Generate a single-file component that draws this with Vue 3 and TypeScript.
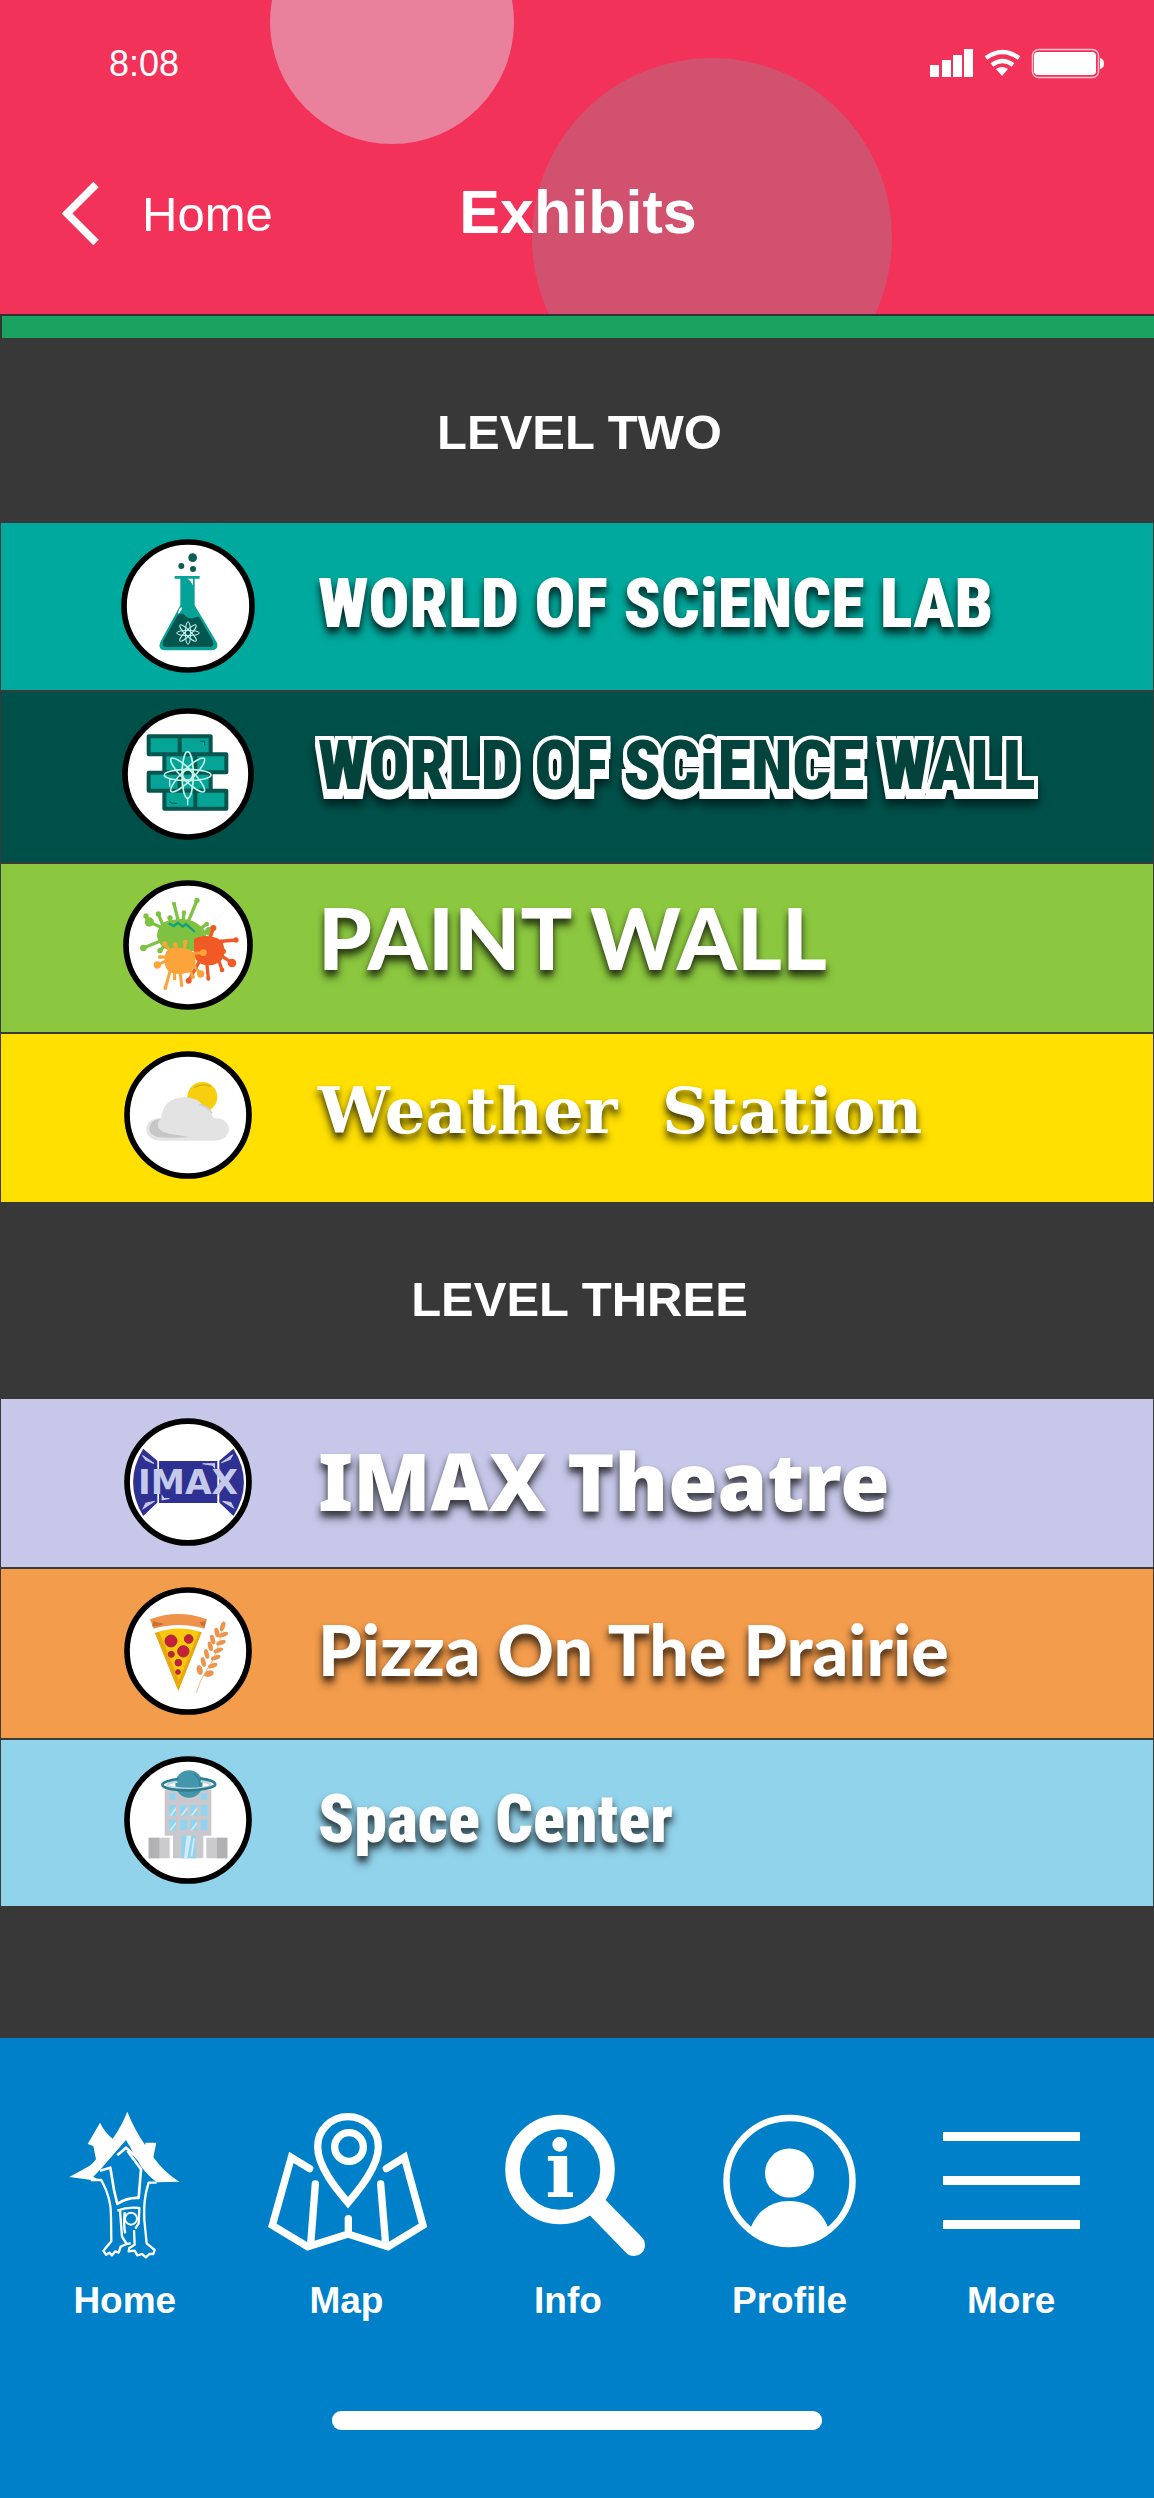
<script setup lang="ts">
interface Exhibit {
  id: string
  name: string
}

interface Level {
  id: string
  title: string
  exhibits: Exhibit[]
}

const levels: Level[] = [
  {
    id: 'two',
    title: 'LEVEL TWO',
    exhibits: [
      { id: 'lab', name: 'WORLD OF SCiENCE LAB' },
      { id: 'wall', name: 'WORLD OF SCiENCE WALL' },
      { id: 'paint', name: 'PAINT WALL' },
      { id: 'weather', name: 'Weather  Station' },
    ],
  },
  {
    id: 'three',
    title: 'LEVEL THREE',
    exhibits: [
      { id: 'imax', name: 'IMAX Theatre' },
      { id: 'pizza', name: 'Pizza On The Prairie' },
      { id: 'space', name: 'Space Center' },
    ],
  },
]

const tabs: string[] = ['Home', 'Map', 'Info', 'Profile', 'More']

// Paint drips: start x, start y, tip x, tip y, tip radius
type Drip = [number, number, number, number, number]
const greenDrips: Drip[] = [
  [205, 205, 150, 180, 14], [195, 200, 177, 156, 8], [240, 190, 224, 125, 6], [262, 190, 293, 115, 8],
  [250, 190, 254, 152, 7], [215, 190, 212, 168, 8], [200, 230, 132, 258, 10], [210, 235, 182, 266, 8],
  [290, 210, 322, 186, 7], [300, 215, 330, 208, 13], [146, 180, 140, 162, 8],
]
const redDrips: Drip[] = [
  [340, 240, 410, 234, 8], [330, 235, 342, 198, 9], [350, 270, 398, 303, 13], [350, 270, 368, 324, 7],
  [320, 280, 327, 350, 6], [310, 280, 268, 356, 9], [355, 262, 372, 268, 8], [345, 245, 366, 240, 7],
]
const orangeDrips: Drip[] = [
  [235, 280, 174, 309, 11], [220, 300, 198, 378, 6], [240, 310, 247, 370, 5], [225, 300, 226, 350, 5],
  [265, 305, 280, 344, 7], [270, 295, 304, 336, 11], [260, 275, 312, 272, 10], [215, 270, 196, 245, 8],
  [255, 265, 258, 240, 7], [235, 265, 228, 248, 7], [215, 285, 182, 285, 6],
]

const grains: [number, number, number][] = [
  [302, 292, -15], [313, 268, -15], [323, 244, -15], [341, 201, -15], [354, 180, -15], [334, 221, -15],
  [330, 303, 70], [341, 279, 70], [350, 255, 70], [358, 233, 70], [366, 210, 70], [373, 186, 70], [371, 161, 20],
]
const petals = [0, 45, 90, 135]
</script>

<template>
  <div class="app">
    <header class="top">
      <span class="bubble bubble-light"></span>
      <span class="bubble bubble-dusk"></span>
      <div class="status">
        <span class="clock">8:08</span>
        <svg class="signals" width="176" height="32" viewBox="929 47 176 32" aria-hidden="true">
          <g fill="#fff">
            <path d="M930 64h9v12h-9zM942 59h9v17h-9zM953 54h9v22h-9zM964 48h9v28h-9z" />
            <path d="M1002 75l-6-7q6-4 12 0z" />
            <rect x="1034" y="51" width="62" height="23" rx="4" />
            <path d="M1100 57q4 1 4 5.500t-4 5.500z" />
          </g>
          <g fill="none" stroke="#fff">
            <path d="M986 57q16-12 33 0M992 64q10.500-8 21 0" stroke-width="4.500" />
            <rect x="1032.500" y="48.500" width="66" height="28" rx="6" stroke="#ffc3cf" stroke-width="1.500" />
          </g>
        </svg>
      </div>
      <div class="bar">
        <a class="back" href="#home">
          <svg width="40" height="66" viewBox="61 182 40 66" aria-hidden="true">
            <path d="M97 185.500L68 214.500 97 243.500" fill="none" stroke="#fff" stroke-width="7.500" />
          </svg>
          <span>Home</span>
        </a>
        <h1>Exhibits</h1>
      </div>
    </header>
    <div class="stripe"></div>

    <main>
      <section v-for="level in levels" :key="level.id" :class="'level-' + level.id">
        <h2>{{ level.title }}</h2>
        <ul>
          <li v-for="item in level.exhibits" :key="item.id">
            <a class="row" :class="item.id" :href="'#' + item.id">
              <span class="badge-slot">
                <svg v-if="item.id === 'lab'" class="badge" viewBox="64 59 402 402" aria-hidden="true">
                  <circle cx="265" cy="260" r="192" fill="#fff" stroke="#000" stroke-width="17" />
                  <circle cx="279" cy="115" r="13" fill="#0b5f57" />
                  <circle cx="245" cy="140" r="9" fill="#0b5f57" />
                  <circle cx="280" cy="149" r="9" fill="#0b5f57" />
                  <path d="M225 170h75v8h-15v80l67 112q6 22-16 23H196q-22-2-15-23l61-112v-80h-17z" fill="#05a397" />
                  <path d="M264 178h16v20q-6-14-16-20zM236 277q2-10 10-14 3 8-10 22z" fill="#fff" />
                  <path d="M190 366l42-76q10-12 22-4 12 14 26 10t18-4l42 74q6 15-8 17H199q-15-2-9-17z" fill="#03554f" />
                  <g fill="none" stroke="#c8f5ee" stroke-width="3">
                    <ellipse v-for="p in petals" :key="p" cx="265" cy="341" rx="34" ry="8" :transform="`rotate(${p} 265 341)`" />
                  </g>
                </svg>

                <svg v-else-if="item.id === 'wall'" class="badge" viewBox="68 564 396 396" aria-hidden="true">
                  <circle cx="266" cy="762" r="189" fill="#fff" stroke="#000" stroke-width="17" />
                  <g fill="#06a497" stroke="#04564e" stroke-width="12" stroke-linejoin="round">
                    <path d="M148 649h93v54h-93zM241 649h93v54h-93zM195 703h93v54h-93zM288 703h93v54h-93zM148 758h93v54h-93zM241 758h93v54h-93zM195 812h93v54h-93zM288 812h93v54h-93z" />
                  </g>
                  <path d="M302 664h14v12M210 842q4 10 12 8h12" fill="none" stroke="#04564e" stroke-width="3" />
                  <g fill="none" stroke="#c4f4ec" stroke-width="5">
                    <circle cx="265" cy="765" r="15" />
                    <ellipse v-for="p in petals" :key="p" cx="265" cy="765" rx="70" ry="17" :transform="`rotate(${p} 265 765)`" />
                    <path d="M265 836v20M211 775v25" stroke-width="4" />
                  </g>
                </svg>

                <svg v-else-if="item.id === 'paint'" class="badge" viewBox="71 54 390 390" aria-hidden="true">
                  <circle cx="266" cy="249" r="186" fill="#fff" stroke="#000" stroke-width="17" />
                  <g fill="#7fc241" stroke="#7fc241" stroke-linecap="round">
                    <path d="M174 212q8-36 46-38 40-8 70 8 34 20 30 42-8 44-48 44-68 8-88-20-14-20-10-36z" stroke="none" />
                    <template v-for="(d, i) in greenDrips" :key="i">
                      <path :d="`M${d[0]} ${d[1]}L${d[2]} ${d[3]}`" stroke-width="10" />
                      <circle :cx="d[2]" :cy="d[3]" :r="d[4]" stroke="none" />
                    </template>
                  </g>
                  <path d="M208 184l16 8 12-10 14 12 10-8 14 12 12 12" fill="none" stroke="#12a37a" stroke-width="7" />
                  <g fill="#f15a24" stroke="#f15a24" stroke-linecap="round">
                    <path d="M284 232q20-14 56-8 32 6 36 40 0 38-40 46-44 2-52-32z" stroke="none" />
                    <template v-for="(d, i) in redDrips" :key="i">
                      <path :d="`M${d[0]} ${d[1]}L${d[2]} ${d[3]}`" stroke-width="10" />
                      <circle :cx="d[2]" :cy="d[3]" :r="d[4]" stroke="none" />
                    </template>
                  </g>
                  <g fill="#fba43a" stroke="#fba43a" stroke-linecap="round">
                    <path d="M200 270q14-18 46-12 36 2 42 24 6 38-22 50-52 12-66-14-10-20 0-48z" stroke="none" />
                    <template v-for="(d, i) in orangeDrips" :key="i">
                      <path :d="`M${d[0]} ${d[1]}L${d[2]} ${d[3]}`" stroke-width="9" />
                      <circle :cx="d[2]" :cy="d[3]" :r="d[4]" stroke="none" />
                    </template>
                  </g>
                </svg>

                <svg v-else-if="item.id === 'weather'" class="badge" viewBox="74 572 384 384" aria-hidden="true">
                  <circle cx="266" cy="764" r="183" fill="#fff" stroke="#000" stroke-width="17" />
                  <circle cx="309" cy="710" r="45" fill="#f6cf0e" />
                  <path d="M284 682q24-14 50-4" fill="none" stroke="#d3ad12" stroke-width="4" />
                  <path d="M141 805q2-30 44-32 8-60 68-62 44 0 58 26 22 12 32 36 42 0 46 34-4 34-44 34H180q-38-4-39-36z" fill="#e3e3e4" />
                  <path d="M150 806q0-26 32-30-22 34 28 44l62 10q-60 4-98 0-22-6-24-24z" fill="#c6c6c7" />
                  <path d="M300 733q26 4 38 26" fill="none" stroke="#cfcfd2" stroke-width="5" />
                </svg>

                <svg v-else-if="item.id === 'imax'" class="badge" viewBox="77 59 380 380" aria-hidden="true">
                  <circle cx="267" cy="249" r="181" fill="#fff" stroke="#000" stroke-width="17" />
                  <path d="M181 187h173v124H181zM134 150l42 36v124l-42 40q-60-100 0-200zM402 150l-42 36v124l42 40q62-100 0-200z" fill="#2e3192" />
                  <path d="M132 170l34 24-24-10zM400 168l-34 24 26-10zM134 328l34-22-26 6zM402 326l-32-20 24 4zM310 195h36v12l-6-8zM190 302v-12l6 8h16z" fill="#c5c9ea" stroke="#c5c9ea" stroke-width="3" />
                  <text x="267" y="285" text-anchor="middle" class="imax-logo">IMAX</text>
                </svg>

                <svg v-else-if="item.id === 'pizza'" class="badge" viewBox="75 43 384 384" aria-hidden="true">
                  <circle cx="267" cy="235" r="183" fill="#fff" stroke="#000" stroke-width="17" />
                  <path d="M153 140q84-32 171 0l-8 28q-74-22-152 0z" fill="#f0934a" />
                  <path d="M160 162q20-2 36-8l-34-8zM316 164q-12-8-14-16l18-2z" fill="#c9703a" />
                  <path d="M168 181q70-26 140-2L238 354z" fill="#f8c70e" />
                  <path d="M168 181l12-4 58 140v37zM308 179l-8-2-62 150v27z" fill="#e8a910" />
                  <g fill="#c4203c" stroke="#a3283a" stroke-width="3">
                    <circle cx="216" cy="205" r="18" /><circle cx="269" cy="199" r="13" />
                    <circle cx="253" cy="236" r="17" /><circle cx="217" cy="245" r="9" />
                    <circle cx="238" cy="270" r="10" /><circle cx="237" cy="298" r="7" />
                  </g>
                  <path d="M292 360q12-40 30-66 36-50 46-120" fill="none" stroke="#ec9a55" stroke-width="2" />
                  <g fill="#ec9550">
                    <ellipse v-for="(g, i) in grains" :key="i" :cx="g[0]" :cy="g[1]" :rx="i === 0 || i === 6 ? 9 : 7" :ry="15" :transform="`rotate(${g[2]} ${g[0]} ${g[1]})`" />
                  </g>
                </svg>

                <svg v-else class="badge" viewBox="74 559 384 384" aria-hidden="true">
                  <circle cx="266" cy="751" r="183" fill="#fff" stroke="#000" stroke-width="17" />
                  <path d="M196 660h140v138h-24v68h-91v-68h-25z" fill="#c9c9cd" />
                  <path d="M148 804h63v62h-63zM321 804h63v62h-63z" fill="#cbcbcd" />
                  <path d="M148 804h32v62h-32zM353 804h31v62h-31z" fill="#b2b2b4" />
                  <path d="M210 670h18v20h-18zM305 670h18v20h-18zM210 706h20v32h-20zM243 706h20v32h-20zM273 706h20v32h-20zM304 706h20v32h-20zM210 750h20v32h-20zM243 750h20v32h-20zM273 750h20v32h-20zM304 750h20v32h-20zM246 798h43v68h-43z" fill="#8fd4f0" />
                  <path d="M262 798h14l-12 68h-10zM282 806h5l-8 54h-5zM210 738l20-26v8l-14 18zM243 738l20-26v8l-14 18zM273 738l20-26v8l-14 18zM210 782l20-26v8l-14 18zM273 782l20-26v8l-14 18z" fill="#d5ecf4" />
                  <circle cx="269" cy="643" r="41" fill="#4496ad" />
                  <path d="M234 636q-40 6-26 14 14 6 62 8 50-2 62-10 6-8-28-14" fill="none" stroke="#bfd9e0" stroke-width="7" />
                  <path d="M236 628q-62 10-42 24 20 10 76 10 58-2 76-14 10-14-44-22" fill="none" stroke="#2b7d8f" stroke-width="8" />
                  <path d="M284 612q20 14 18 38" fill="none" stroke="#2f8094" stroke-width="4" />
                </svg>
              </span>
              <span class="name">{{ item.name }}</span>
            </a>
          </li>
        </ul>
      </section>
    </main>

    <footer>
      <nav>
        <a v-for="tab in tabs" :key="tab" :href="'#' + tab.toLowerCase()">
          <svg v-if="tab === 'Home'" width="160" height="150" viewBox="15 90 480 450" aria-hidden="true">
            <path d="M88 291L148 258Q160 250 168 238L160 198 143 192 180 128Q195 158 218 176 244 140 262 95 284 150 316 196V188H349L340 232Q375 280 418 305L350 307Q322 285 305 262L258 180 185 264 160 290 178 300 150 299Z" fill="#fff" />
            <g fill="none" stroke="#fff" stroke-width="8" stroke-linejoin="round">
              <path d="M232 226L258 203 284 226 326 270" />
              <path d="M180 272L211 263 222 330 232 372Q262 352 296 354L303 268 262 212" />
              <path d="M152 300H184C206 340 214 370 213 410L214 484 190 512 198 524 208 518 216 526 226 514 236 518 242 500Q262 490 272 490" stroke-width="7" />
              <path d="M350 308H326C312 350 312 380 313 420L320 490 344 510 340 522 328 522 318 532 306 522 292 526 284 512 266 514 268 504 284 494 282 450" stroke-width="7" />
              <path d="M232 392Q262 380 298 384L296 430 286 446M240 392L246 470 260 492M254 396Q250 440 256 460" stroke-width="7" />
              <circle cx="273" cy="416" r="18" stroke-width="6" />
            </g>
          </svg>
          <svg v-else-if="tab === 'Map'" width="160" height="150" viewBox="679 90 480 450" overflow="visible" aria-hidden="true">
            <g fill="none" stroke="#fff" stroke-width="22" stroke-linecap="round">
              <path d="M925 368C900 338 834 264 834 200A91 90 0 0 1 1016 200C1016 264 950 338 925 368Z" />
              <circle cx="928" cy="201" r="43" />
              <path d="M810 266L755 232 698 436 804 500 925 462 1045 500 1150 436 1094 232 1040 266M827 312L813 492M1023 312L1038 492M926 416V460" />
            </g>
          </svg>
          <svg v-else-if="tab === 'Info'" width="160" height="150" viewBox="488 2110 160 150" aria-hidden="true">
            <circle cx="560" cy="2169.500" r="47.500" fill="none" stroke="#fff" stroke-width="14.500" />
            <path d="M598 2208L634 2245" stroke="#fff" stroke-width="22" stroke-linecap="round" />
            <text x="560" y="2197" text-anchor="middle" class="info-mark">i</text>
          </svg>
          <svg v-else-if="tab === 'Profile'" width="160" height="150" viewBox="710 2110 160 150" aria-hidden="true">
            <circle cx="789.500" cy="2181" r="63" fill="none" stroke="#fff" stroke-width="6.500" />
            <circle cx="789.500" cy="2173" r="24.500" fill="#fff" />
            <path d="M751 2227Q762 2201 789.500 2201T828 2227Q812 2246 789.500 2246T751 2227Z" fill="#fff" />
          </svg>
          <svg v-else width="160" height="150" viewBox="931 2110 160 150" aria-hidden="true">
            <path d="M943 2136.500h137M943 2180.500h137M943 2224.500h137" stroke="#fff" stroke-width="9" />
          </svg>
          <span>{{ tab }}</span>
        </a>
      </nav>
      <div class="home-indicator"></div>
    </footer>
  </div>
</template>

<style>
body {
  background: #383838;
}
</style>

<style scoped>
.app {
  font-family: "Liberation Sans", Arial, sans-serif;
  color: #fff;
  background: #383838;
}
a {
  color: inherit;
  text-decoration: none;
}
h1,
h2,
ul {
  margin: 0;
  padding: 0;
}
ul {
  list-style: none;
}
svg {
  display: block;
  flex: none;
}

.top {
  position: relative;
  overflow: hidden;
  height: 314px;
  background: #f23259;
}
.bubble {
  position: absolute;
  border-radius: 50%;
}
.bubble-light {
  left: 270px;
  top: -100px;
  width: 244px;
  height: 244px;
  background: #e9819c;
}
.bubble-dusk {
  left: 532px;
  top: 58px;
  width: 360px;
  height: 360px;
  background: #d2516f;
}
.status {
  position: relative;
  display: flex;
  justify-content: space-between;
  align-items: center;
  padding: 43px 49px 0 109px;
}
.clock {
  font-size: 36px;
  line-height: 42px;
}
.bar {
  position: relative;
  display: grid;
  grid-template-columns: 1fr auto 1fr;
  align-items: center;
  margin-top: 92px;
  padding: 0 58px 0 60px;
}
.back {
  display: flex;
  align-items: center;
  gap: 42px;
  font-size: 49px;
  line-height: 74px;
}
h1 {
  font-size: 61px;
  line-height: 70px;
  padding-bottom: 4px;
}
.stripe {
  height: 22px;
  border: 2px solid #333;
  border-bottom: 0;
  border-right: 0;
  background: #1aa260;
}

h2 {
  display: flex;
  align-items: center;
  justify-content: center;
  font-size: 49px;
  line-height: 56px;
}
.level-two h2 {
  padding: 66px 0 63px 5px;
}
.level-three h2 {
  padding: 69px 0 72px 5px;
}
.row {
  box-sizing: border-box;
  display: flex;
  align-items: center;
  gap: 64px;
  min-height: 170px;
  padding: 0 40px 6px 121px;
  border: 1px solid #3a3a3a;
  border-width: 2px 1px 0;
}
li:first-child .row {
  border-top-width: 0;
  padding-bottom: 2px;
}
.badge-slot {
  flex: none;
  display: flex;
  justify-content: center;
  width: 132px;
}
.badge {
  width: 128px;
  height: 128px;
}
.name {
  white-space: pre;
  font-weight: 700;
  line-height: 100px;
  padding-bottom: 4px;
  text-shadow: 0 5px 6px rgba(0, 0, 0, 0.6), 0 8px 10px rgba(0, 0, 0, 0.35);
}

.lab {
  min-height: 167px;
  background: #00a99d;
}
.lab .badge {
  width: 134px;
  height: 134px;
}
.lab .name,
.wall .name {
  font-family: "Roboto Condensed", "Liberation Sans Narrow", sans-serif;
  font-size: 68px;
  font-weight: 900;
}
.wall {
  min-height: 172px;
  background: #00504a;
}
.wall .badge {
  width: 132px;
  height: 132px;
}
.wall .name {
  padding-bottom: 16px;
  color: #03433c;
  -webkit-text-stroke: 8px #fff;
  paint-order: stroke fill;
  text-shadow: none;
  filter: drop-shadow(0 6px 0 #fff) drop-shadow(0 6px 5px rgba(0, 0, 0, 0.6));
}
.paint {
  background: #8cc83f;
}
.paint .badge {
  width: 130px;
  height: 130px;
}
.paint .name {
  padding-bottom: 16px;
  font-family: Lato, sans-serif;
  font-size: 86px;
  font-weight: 900;
}
.weather {
  background: #ffe000;
}
.weather .name {
  padding-bottom: 8px;
  font-family: "DejaVu Serif", serif;
  font-size: 64px;
}
.imax {
  min-height: 168px;
  background: #c7c8e9;
}
.imax .name {
  font-family: "Noto Sans", "Open Sans", sans-serif;
  font-size: 80px;
  font-weight: 900;
}
.imax-logo {
  font-family: "DejaVu Sans", sans-serif;
  font-size: 102px;
  font-weight: 700;
  fill: #c5c9ea;
}
.pizza {
  min-height: 171px;
  background: #f39c4c;
}
.pizza .name {
  font-family: Lato, sans-serif;
  font-size: 70px;
  font-weight: 900;
}
.space {
  min-height: 168px;
  background: #92d3ec;
}
.space .name {
  padding-bottom: 0;
  font-family: "Roboto Condensed", "Liberation Sans Narrow", sans-serif;
  font-size: 66px;
  font-weight: 900;
}

footer {
  margin-top: 132px;
  padding: 72px 0 68px;
  background: #0080c9;
}
nav {
  display: grid;
  grid-template-columns: repeat(5, 1fr);
  padding: 0 32px 0 14px;
}
nav a {
  display: flex;
  flex-direction: column;
  align-items: center;
  gap: 20px;
  font-size: 37px;
  font-weight: 700;
  line-height: 42px;
}
.info-mark {
  font-family: "DejaVu Serif", serif;
  font-size: 78px;
  font-weight: 700;
  fill: #fff;
}
.home-indicator {
  width: 490px;
  height: 19px;
  margin: 89px auto 0;
  border-radius: 9px;
  background: #fff;
}
</style>
